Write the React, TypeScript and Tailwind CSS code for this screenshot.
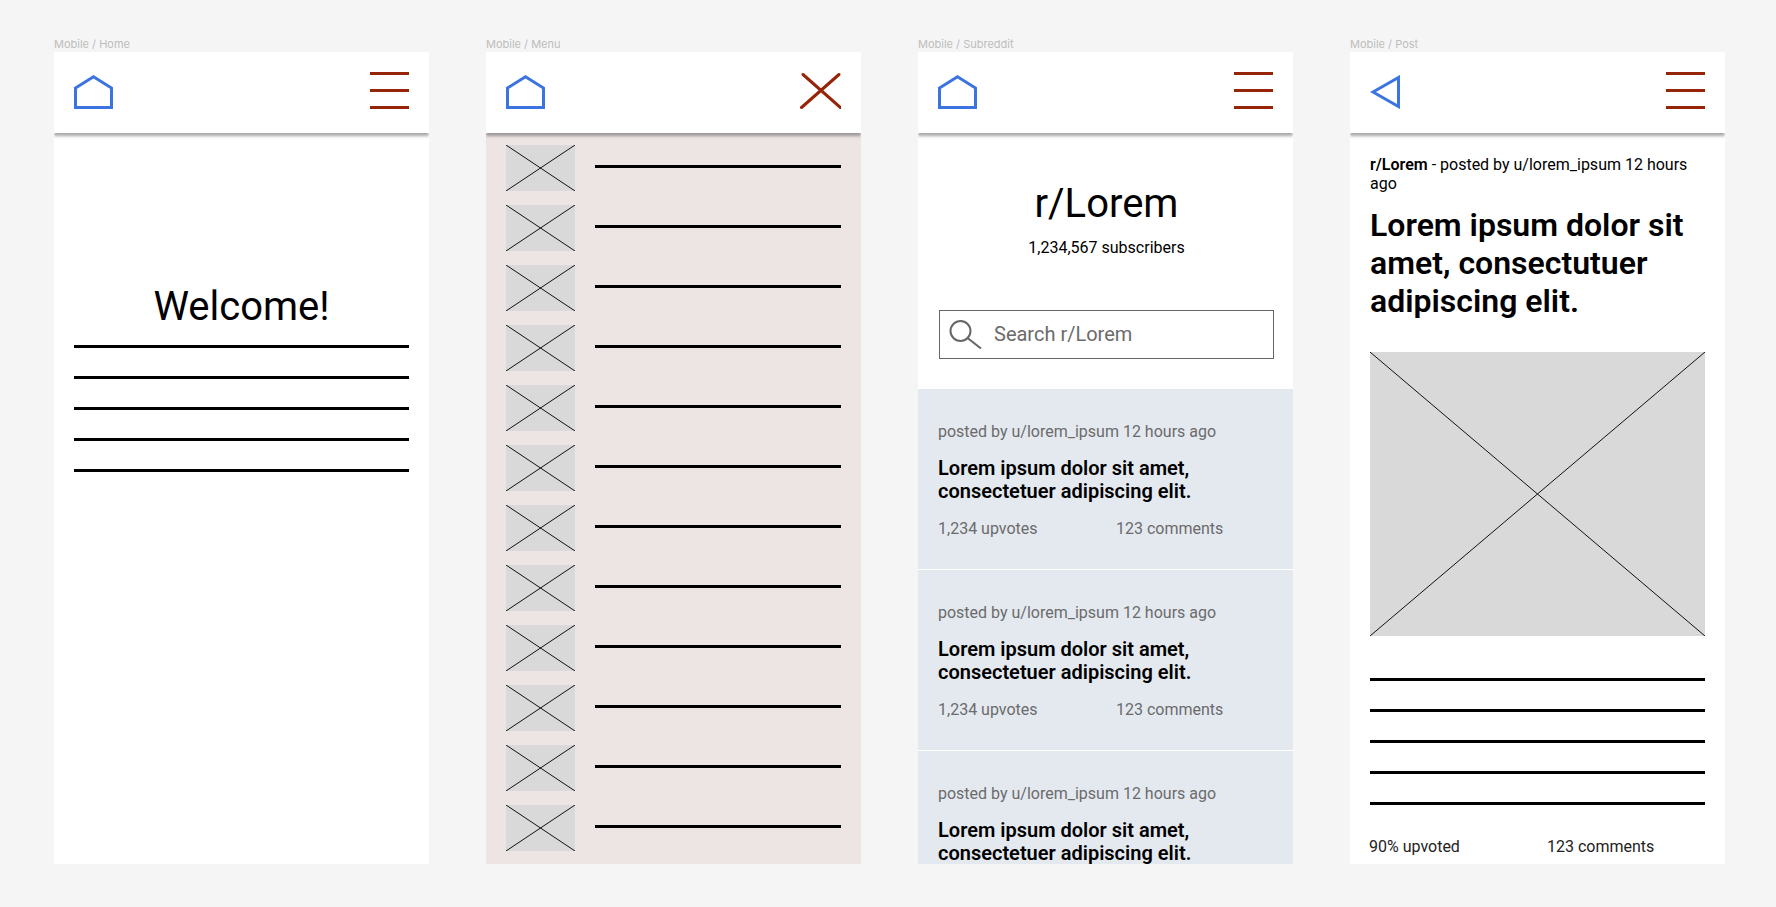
const Header = ({ icon, action }: { icon: 'home' | 'back'; action: 'menu' | 'close' }) => (
  <header className="relative z-10 flex h-[81px] shrink-0 items-start justify-between bg-white px-[20px] shadow-[0_3px_3px_rgba(0,0,0,0.35)]">
    {icon === 'home' ? (
      <svg className="mt-[23px]" width="39" height="34" viewBox="0 0 39 34" fill="none">
        <path d="M1.5 13 L19.5 1.8 L37.5 13 V32.5 H1.5 Z" stroke="#3b74e0" strokeWidth="3" />
      </svg>
    ) : (
      <svg className="mt-[23px]" width="30" height="34" viewBox="0 0 30 34" fill="none">
        <path d="M3 17 L28.5 2.5 V31.5 Z" stroke="#3b74e0" strokeWidth="3" />
      </svg>
    )}
    {action === 'menu' ? (
      <div className="mt-[20px] flex w-[39px] flex-col gap-[14px]">
        <div className="h-[3px] bg-[#962409]" />
        <div className="h-[3px] bg-[#962409]" />
        <div className="h-[3px] bg-[#962409]" />
      </div>
    ) : (
      <svg className="mt-[21px]" width="42" height="36" viewBox="0 0 42 36" fill="none">
        <path d="M2.5 34.5 L40 1.5 M4 1.5 L41.5 34.5" stroke="#962409" strokeWidth="3" strokeLinecap="round" />
      </svg>
    )}
  </header>
);

const Placeholder = ({ className }: { className: string }) => (
  <svg className={className} viewBox="0 0 100 100" preserveAspectRatio="none">
    <rect width="100" height="100" fill="#d9d9d9" />
    <path d="M0 0 L100 100 M100 0 L0 100" stroke="#111" strokeWidth="1" vectorEffect="non-scaling-stroke" />
  </svg>
);

const TextLines = () => (
  <div className="flex flex-col gap-[28px]">
    {[0, 1, 2, 3, 4].map((i) => (
      <div key={i} className="h-[3px] bg-black" />
    ))}
  </div>
);

const Frame = ({ label, children }: { label: string; children: React.ReactNode }) => (
  <section className="w-[375px] shrink-0">
    <div className="h-[20px] pt-[6px] font-['Inter',sans-serif] text-[11px] leading-[13px] text-[#bdbdbd]">{label}</div>
    <div className="flex h-[812px] flex-col overflow-hidden bg-white">{children}</div>
  </section>
);

const PostCard = () => (
  <article className="h-[180px] shrink-0 bg-[#e4e9f0] px-[20px] pt-[33px]">
    <p className="text-[16px] leading-[19px] text-[#6b6b6b]">posted by u/lorem_ipsum 12 hours ago</p>
    <h3 className="mt-[16px] w-[300px] text-[20px] leading-[23px] font-semibold text-black">
      Lorem ipsum dolor sit amet, consectetuer adipiscing elit.
    </h3>
    <div className="mt-[16px] flex text-[16px] leading-[19px] text-[#6b6b6b]">
      <span className="w-[178px]">1,234 upvotes</span>
      <span>123 comments</span>
    </div>
  </article>
);

export default function App() {
  const menuItems = Array.from({ length: 12 }, (_, i) => i);

  return (
    <div className="flex h-[907px] gap-[57px] overflow-hidden bg-[#f5f5f5] pt-[32px] pl-[54px] font-['Roboto',sans-serif]">
      <Frame label="Mobile / Home">
        <Header icon="home" action="menu" />
        <div className="px-[20px] pt-[150px]">
          <h1 className="text-center text-[40px] leading-[47px] text-black">Welcome!</h1>
          <div className="mt-[15px]">
            <TextLines />
          </div>
        </div>
      </Frame>

      <Frame label="Mobile / Menu">
        <Header icon="home" action="close" />
        <div className="flex flex-1 flex-col gap-[14px] bg-[#ede5e4] pt-[12px] pl-[20px]">
          {menuItems.map((item) => (
            <div key={item} className="flex h-[46px] shrink-0 items-start gap-[20px] pr-[20px]">
              <Placeholder className="h-[46px] w-[69px] shrink-0" />
              <div className="mt-[20px] h-[3px] flex-1 bg-black" />
            </div>
          ))}
        </div>
      </Frame>

      <Frame label="Mobile / Subreddit">
        <Header icon="home" action="menu" />
        <div className="h-[256px] shrink-0 pt-[47px]">
          <h1 className="pl-[2px] text-center text-[40px] leading-[47px] text-black">r/Lorem</h1>
          <p className="mt-[11px] pl-[2px] text-center text-[16px] leading-[19px] text-black">1,234,567 subscribers</p>
          <div className="mt-[53px] mr-[19px] ml-[21px] flex h-[49px] items-center border border-[#666] pl-[9px]">
            <svg width="33" height="29" viewBox="0 0 33 29" fill="none">
              <circle cx="11.5" cy="11" r="10" stroke="#666" strokeWidth="2" />
              <path d="M18.5 18 L32 28.5" stroke="#666" strokeWidth="2" />
            </svg>
            <span className="ml-[12px] text-[20px] leading-[23px] text-[#6b6b6b]">Search r/Lorem</span>
          </div>
        </div>
        <div className="flex flex-col gap-[1px]">
          <PostCard />
          <PostCard />
          <PostCard />
        </div>
      </Frame>

      <Frame label="Mobile / Post">
        <Header icon="back" action="menu" />
        <div className="px-[20px] pt-[22px]">
          <p className="text-[16px] leading-[19px] text-black">
            <strong className="font-semibold">r/Lorem</strong> - posted by u/lorem_ipsum 12 hours ago
          </p>
          <h1 className="mt-[13px] text-[32px] leading-[38px] font-semibold text-black">
            Lorem ipsum dolor sit amet, consectutuer adipiscing elit.
          </h1>
          <Placeholder className="mt-[32px] h-[284px] w-[335px]" />
          <div className="mt-[42px]">
            <TextLines />
          </div>
          <div className="mt-[32px] -ml-[1px] flex text-[16px] leading-[19px] text-[#222]">
            <span className="w-[178px]">90% upvoted</span>
            <span>123 comments</span>
          </div>
        </div>
      </Frame>
    </div>
  );
}
